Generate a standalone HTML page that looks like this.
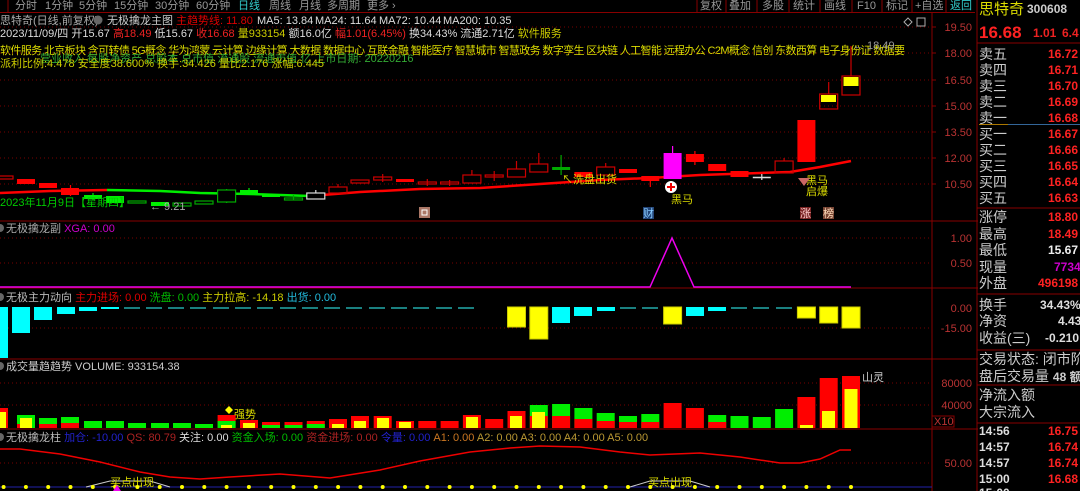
<!DOCTYPE html>
<html><head><meta charset="utf-8"><style>
html,body{margin:0;padding:0;background:#000;width:1080px;height:491px;overflow:hidden}
svg{position:absolute;left:0;top:0}
text{font-family:"Liberation Sans","Noto Sans CJK SC",sans-serif;font-size:11px}
.r text{font-size:14px}
</style></head><body>
<svg width="1080" height="491" viewBox="0 0 1080 491">
<rect width="1080" height="491" fill="#000"/>
<!-- toolbar -->
<line x1="0" y1="12.5" x2="975" y2="12.5" stroke="#800" />
<g fill="#999">
<text x="15" y="9">分时</text><text x="45" y="9">1分钟</text><text x="79" y="9">5分钟</text><text x="114" y="9">15分钟</text><text x="155" y="9">30分钟</text><text x="196" y="9">60分钟</text><text x="238" y="9" fill="#3cc">日线</text><text x="269" y="9">周线</text><text x="299" y="9">月线</text><text x="327" y="9">多周期</text><text x="367" y="9">更多 ›</text>
<text x="700" y="9">复权</text><text x="729" y="9">叠加</text><text x="762" y="9">多股</text><text x="793" y="9">统计</text><text x="824" y="9">画线</text><text x="857" y="9">F10</text><text x="886" y="9">标记</text><text x="915" y="9">+自选</text><text x="950" y="9" fill="#3cc">返回</text>
</g>
<g stroke="#800"><line x1="697" y1="0" x2="697" y2="12"/><line x1="726" y1="0" x2="726" y2="12"/><line x1="757" y1="0" x2="757" y2="12"/><line x1="789" y1="0" x2="789" y2="12"/><line x1="820" y1="0" x2="820" y2="12"/><line x1="852" y1="0" x2="852" y2="12"/><line x1="882" y1="0" x2="882" y2="12"/><line x1="912" y1="0" x2="912" y2="12"/><line x1="946" y1="0" x2="946" y2="12"/><line x1="8" y1="0" x2="8" y2="12"/></g>
<!-- header rows -->
<text x="0" y="24" fill="#aaa">思特奇(日线,前复权)</text>
<circle cx="98" cy="20" r="4.5" fill="#666"/>
<text x="107" y="24" fill="#ccc">无极擒龙主图</text>
<text x="176" y="24" fill="#d00">主趋势线: 11.80</text>
<text x="257" y="24" fill="#ddd">MA5: 13.84</text><text x="315" y="24" fill="#ddd">MA24: 11.64</text><text x="379" y="24" fill="#ddd">MA72: 10.44</text><text x="443" y="24" fill="#ddd">MA200: 10.35</text>
<text x="0" y="37" fill="#ddd">2023/11/09/四 开15.67 <tspan fill="#e22">高18.49</tspan> 低15.67 <tspan fill="#e22">收16.68</tspan> <tspan fill="#cc0">量933154</tspan> 额16.0亿 <tspan fill="#e22">幅1.01(6.45%)</tspan> 换34.43% 流通2.71亿 <tspan fill="#cc0">软件服务</tspan></text>
<text x="0" y="54" fill="#dd0" textLength="905">软件服务 北京板块 含可转债 5G概念 华为鸿蒙 云计算 边缘计算 大数据 数据中心 互联金融 智能医疗 智慧城市 智慧政务 数字孪生 区块链 人工智能 远程办公 C2M概念 信创 东数西算 电子身份证 数据要</text>
<text x="40" y="62" fill="#3a3">营业收入 每股净资产 总股本 总市值 流通股 流通市值 亿 上市日期: 20220216</text>
<text x="0" y="67" fill="#cc0">派利比例:4.478  安全度38.600%  换手:34.426 量比2.176  涨幅:6.445</text>
<path d="M908 18 l4 4 -4 4 -4 -4z" fill="none" stroke="#aaa"/><rect x="917" y="18" width="8" height="8" fill="none" stroke="#aaa"/>
<!-- grid main -->
<g stroke="#700" stroke-dasharray="1,3">
<line x1="0" y1="27" x2="932" y2="27"/><line x1="0" y1="53" x2="932" y2="53"/><line x1="0" y1="80" x2="932" y2="80"/><line x1="0" y1="106" x2="932" y2="106"/><line x1="0" y1="132" x2="932" y2="132"/><line x1="0" y1="158" x2="932" y2="158"/><line x1="0" y1="184" x2="932" y2="184"/>
<line x1="0" y1="238" x2="932" y2="238"/><line x1="0" y1="263" x2="932" y2="263"/>
<line x1="0" y1="328" x2="932" y2="328"/>
<line x1="0" y1="383" x2="932" y2="383"/><line x1="0" y1="405" x2="932" y2="405"/>
<line x1="0" y1="463" x2="932" y2="463"/>
</g>
<g stroke="#800"><line x1="0" y1="221" x2="978" y2="221"/><line x1="0" y1="288" x2="978" y2="288"/><line x1="0" y1="359" x2="978" y2="359"/><line x1="0" y1="429" x2="978" y2="429"/><line x1="932" y1="13" x2="932" y2="491"/><line x1="977" y1="0" x2="977" y2="491"/></g>
<g stroke="#800"><line x1="932" y1="27" x2="936" y2="27"/><line x1="932" y1="53" x2="936" y2="53"/><line x1="932" y1="80" x2="936" y2="80"/><line x1="932" y1="106" x2="936" y2="106"/><line x1="932" y1="132" x2="936" y2="132"/><line x1="932" y1="158" x2="936" y2="158"/><line x1="932" y1="184" x2="936" y2="184"/></g>
<g fill="#b33" text-anchor="end">
<text x="972" y="31">19.50</text><text x="972" y="57">18.00</text><text x="972" y="84">16.50</text><text x="972" y="110">15.00</text><text x="972" y="136">13.50</text><text x="972" y="162">12.00</text><text x="972" y="188">10.50</text>
<text x="972" y="242">1.00</text><text x="972" y="267">0.50</text><text x="972" y="312">0.00</text><text x="972" y="332">-15.00</text>
<text x="972" y="387">80000</text><text x="972" y="409">40000</text><text x="972" y="467">50.00</text>
</g>
<rect x="932" y="416" width="22" height="11" fill="none" stroke="#800"/><text x="934" y="425" fill="#b33" font-size="10">X10</text>
<!-- MA line -->
<polyline points="0,193 50,191 107,190" fill="none" stroke="#f00" stroke-width="2.5"/>
<polyline points="107,190 160,191 200,193 250,194 310,196" fill="none" stroke="#0e0" stroke-width="2.5"/>
<polyline points="310,196 360,192 420,189 480,188 540,184 600,180 650,178 700,175 760,173 790,172 820,167 851,161" fill="none" stroke="#f00" stroke-width="2.5"/>
<!-- candles -->
<g stroke-width="1.2">
<rect x="-5" y="176" width="18" height="3" fill="none" stroke="#c00"/>
<rect x="17" y="179" width="18" height="5" fill="#f00"/>
<rect x="39" y="183" width="18" height="5" fill="#f00"/>
<line x1="70.5" y1="185" x2="70.5" y2="196" stroke="#f00"/><rect x="61" y="188" width="18" height="7" fill="#f00"/>
<line x1="93" y1="193" x2="93" y2="200" stroke="#0e0"/><rect x="84" y="195" width="18" height="4" fill="#0e0"/>
<rect x="106" y="196" width="18" height="7" fill="#0e0"/>
<rect x="128" y="201" width="18" height="2" fill="none" stroke="#0a0"/>
<rect x="151" y="202" width="18" height="4" fill="#0e0"/>
<rect x="173" y="203" width="18" height="3" fill="none" stroke="#0a0"/>
<rect x="195" y="201" width="18" height="3" fill="none" stroke="#0a0"/>
<line x1="226.6" y1="189" x2="226.6" y2="203" stroke="#0a0"/><rect x="217.6" y="190" width="18" height="12" fill="#000" stroke="#0a0"/>
<line x1="249" y1="188" x2="249" y2="195" stroke="#0e0"/><rect x="240" y="190" width="18" height="5" fill="#0e0"/>
<rect x="262" y="194" width="18" height="3" fill="#0e0"/>
<line x1="293.5" y1="195" x2="293.5" y2="200" stroke="#0a0"/><rect x="284.5" y="198" width="18" height="2" fill="none" stroke="#0a0"/>
<line x1="315.8" y1="190" x2="315.8" y2="193" stroke="#ddd"/><rect x="306.8" y="193" width="18" height="6" fill="#000" stroke="#ddd"/>
<line x1="338" y1="184" x2="338" y2="187" stroke="#c00"/><rect x="329" y="187" width="18" height="6" fill="none" stroke="#c00"/>
<rect x="351" y="180" width="18" height="3" fill="none" stroke="#c00"/>
<line x1="382.7" y1="174" x2="382.7" y2="182" stroke="#c00"/><rect x="373.7" y="177" width="18" height="3" fill="none" stroke="#c00"/>
<rect x="396" y="179" width="18" height="3" fill="#f00"/>
<line x1="427.3" y1="179" x2="427.3" y2="186" stroke="#c00"/><rect x="418.3" y="182" width="18" height="2" fill="none" stroke="#c00"/>
<line x1="449.6" y1="180" x2="449.6" y2="186" stroke="#c00"/><rect x="440.6" y="182" width="18" height="2" fill="none" stroke="#c00"/>
<line x1="471.9" y1="170" x2="471.9" y2="175" stroke="#c00"/><rect x="462.9" y="175" width="18" height="8" fill="none" stroke="#c00"/>
<line x1="494.2" y1="171" x2="494.2" y2="181" stroke="#c00"/><rect x="485.2" y="175" width="18" height="2" fill="none" stroke="#c00"/>
<line x1="516.5" y1="161" x2="516.5" y2="169" stroke="#c00"/><rect x="507.5" y="169" width="18" height="8" fill="none" stroke="#c00"/>
<line x1="538.8" y1="153" x2="538.8" y2="164" stroke="#c00"/><rect x="529.8" y="164" width="18" height="8" fill="none" stroke="#c00"/>
<line x1="561.1" y1="155" x2="561.1" y2="175" stroke="#0a0"/><rect x="552.1" y="167" width="18" height="3" fill="#0a0"/>
<rect x="574.4" y="172" width="18" height="5" fill="#f00"/>
<line x1="605.7" y1="163" x2="605.7" y2="167" stroke="#c00"/><rect x="596.7" y="167" width="18" height="8" fill="none" stroke="#c00"/>
<rect x="619" y="169" width="18" height="4" fill="#f00"/>
<line x1="650.3" y1="176" x2="650.3" y2="187" stroke="#f00"/><rect x="641.3" y="176" width="18" height="5" fill="#f00"/>
<line x1="672.6" y1="146" x2="672.6" y2="153" stroke="#f0f"/><rect x="663.6" y="153" width="18" height="26" fill="#f0f"/>
<line x1="694.9" y1="151" x2="694.9" y2="165" stroke="#f00"/><rect x="685.9" y="154" width="18" height="8" fill="#f00"/>
<rect x="708.2" y="164" width="18" height="7" fill="#f00"/>
<rect x="730.5" y="171" width="18" height="6" fill="#f00"/>
<line x1="761.8" y1="174" x2="761.8" y2="180" stroke="#ddd"/><line x1="752.8" y1="177.5" x2="770.8" y2="177.5" stroke="#ddd" stroke-width="1.5"/>
<line x1="784.1" y1="158" x2="784.1" y2="161" stroke="#c00"/><rect x="775.1" y="161" width="18" height="12" fill="none" stroke="#c00"/>
<rect x="797.4" y="120" width="18" height="42" fill="#f00"/>
<line x1="828.7" y1="82" x2="828.7" y2="94" stroke="#c00"/><rect x="819.7" y="94" width="18" height="15" fill="none" stroke="#c00"/><rect x="821" y="95" width="15" height="7" fill="#ff0"/>
<line x1="851" y1="46" x2="851" y2="76" stroke="#c00"/><rect x="842" y="76" width="18" height="19" fill="none" stroke="#c00"/><rect x="843.5" y="77" width="15" height="9" fill="#ff0"/>
</g>
<text x="853" y="49" fill="#999" font-size="10">← 18.49</text>
<!-- annotations main -->
<text x="0" y="206" fill="#0c0">2023年11月9日【星期四】</text>
<text x="150" y="210" fill="#aaa" font-size="10">← 9.21</text>
<text x="562" y="183" fill="#dd0">↖洗盘出货</text>
<circle cx="671" cy="187" r="6" fill="#fff"/><path d="M671 183v8M667 187h8" stroke="#e00" stroke-width="2"/>
<text x="671" y="203" fill="#dd0">黑马</text>
<text x="806" y="184" fill="#dd0">黑马</text><text x="806" y="195" fill="#dd0">启爆</text>
<path d="M798 178 l12 0 -6 8z" fill="#c66"/>
<rect x="419" y="207" width="11" height="11" fill="#a76" /><rect x="422" y="210" width="5" height="5" fill="none" stroke="#fff"/>
<rect x="643" y="207" width="11" height="12" fill="#247"/><text x="643" y="217" fill="#8cf" font-size="10">财</text>
<rect x="800" y="207" width="11" height="12" fill="#722"/><text x="800" y="217" fill="#fcc" font-size="10">涨</text>
<rect x="823" y="207" width="11" height="12" fill="#743"/><text x="823" y="217" fill="#fdb" font-size="10">榜</text>
<!-- sub1 -->
<circle cx="0" cy="228" r="4" fill="#666"/>
<text x="6" y="232" fill="#aaa">无极擒龙副 <tspan fill="#c0c">XGA: 0.00</tspan></text>
<polyline points="0,287 650,287 672,238 694,287 851,287" fill="none" stroke="#e0e" stroke-width="1.5"/>
<!-- sub2 -->
<circle cx="0" cy="297" r="4" fill="#666"/>
<text x="6" y="301" fill="#bbb">无极主力动向 <tspan fill="#d00">主力进场: 0.00</tspan> <tspan fill="#0b0">洗盘: 0.00</tspan> <tspan fill="#cc0">主力拉高: -14.18</tspan> <tspan fill="#2bd">出货: 0.00</tspan></text>
<g fill="#0ff">
<rect x="0" y="307" width="8" height="51"/><rect x="12" y="307" width="18" height="26"/><rect x="34" y="307" width="18" height="13"/><rect x="57" y="307" width="18" height="7"/><rect x="79" y="307" width="18" height="4"/><rect x="101" y="307" width="18" height="2"/>
<rect x="552" y="307" width="18" height="16"/><rect x="574" y="307" width="18" height="9"/><rect x="597" y="307" width="18" height="4"/><rect x="686" y="307" width="18" height="9"/><rect x="708" y="307" width="18" height="4"/>
</g>
<g stroke="#2aa" stroke-width="1.5">
<line x1="124" y1="308" x2="140" y2="308"/><line x1="146" y1="308" x2="162" y2="308"/><line x1="168" y1="308" x2="184" y2="308"/><line x1="190" y1="308" x2="206" y2="308"/><line x1="213" y1="308" x2="229" y2="308"/><line x1="235" y1="308" x2="251" y2="308"/><line x1="257" y1="308" x2="273" y2="308"/><line x1="280" y1="308" x2="296" y2="308"/><line x1="302" y1="308" x2="318" y2="308"/><line x1="324" y1="308" x2="340" y2="308"/><line x1="346" y1="308" x2="362" y2="308"/><line x1="369" y1="308" x2="385" y2="308"/><line x1="391" y1="308" x2="407" y2="308"/><line x1="413" y1="308" x2="429" y2="308"/><line x1="436" y1="308" x2="452" y2="308"/><line x1="458" y1="308" x2="474" y2="308"/>
<line x1="620" y1="308" x2="636" y2="308"/><line x1="642" y1="308" x2="658" y2="308"/><line x1="731" y1="308" x2="747" y2="308"/><line x1="753" y1="308" x2="769" y2="308"/><line x1="776" y1="308" x2="792" y2="308"/>
</g>
<g fill="#ff0" stroke="#cc0">
<rect x="507.5" y="307" width="18" height="20"/><rect x="529.8" y="307" width="18" height="32"/><rect x="663.6" y="307" width="18" height="17"/><rect x="797.4" y="307" width="18" height="11"/><rect x="819.7" y="307" width="18" height="16"/><rect x="842" y="307" width="18" height="21"/>
</g>
<!-- volume -->
<circle cx="0" cy="366" r="4" fill="#666"/>
<text x="6" y="370" fill="#ccc">成交量趋趋势 VOLUME: 933154.38</text>
<g>
<rect x="0" y="408" width="8" height="20" fill="#f00"/><rect x="0" y="412" width="6" height="16" fill="#ff0"/>
<rect x="17" y="415" width="18" height="13" fill="#0e0"/><rect x="20" y="418" width="12" height="10" fill="#ff0"/><rect x="17" y="424" width="3" height="4" fill="#f00"/>
<rect x="39" y="418" width="18" height="10" fill="#0e0"/><rect x="39" y="424" width="18" height="4" fill="#f00"/>
<rect x="61" y="417" width="18" height="11" fill="#0e0"/><rect x="61" y="423" width="18" height="5" fill="#f00"/>
<rect x="84" y="421" width="18" height="7" fill="#0e0"/>
<rect x="106" y="421" width="18" height="7" fill="#0e0"/>
<rect x="128" y="423" width="18" height="5" fill="#0e0"/>
<rect x="151" y="423" width="18" height="5" fill="#0e0"/>
<rect x="173" y="423" width="18" height="5" fill="#0e0"/>
<rect x="195" y="424" width="18" height="4" fill="#0e0"/>
<rect x="217.6" y="415" width="18" height="13" fill="#f00"/><rect x="217.6" y="421" width="18" height="7" fill="#0e0"/><rect x="221" y="425" width="11" height="3" fill="#ff0"/>
<rect x="240" y="420" width="18" height="8" fill="#f00"/><rect x="243" y="423" width="12" height="5" fill="#ff0"/>
<rect x="262" y="422" width="18" height="6" fill="#f00"/><rect x="262" y="425" width="18" height="3" fill="#0e0"/>
<rect x="284.5" y="422" width="18" height="6" fill="#f00"/><rect x="284.5" y="425" width="18" height="3" fill="#0e0"/>
<rect x="306.8" y="421" width="18" height="7" fill="#f00"/><rect x="306.8" y="424" width="18" height="4" fill="#0e0"/>
<rect x="329" y="419" width="18" height="9" fill="#f00"/><rect x="332" y="424" width="12" height="4" fill="#ff0"/>
<rect x="351" y="416" width="18" height="12" fill="#f00"/><rect x="354" y="421" width="12" height="7" fill="#ff0"/>
<rect x="373.7" y="416" width="18" height="12" fill="#f00"/><rect x="377" y="418" width="12" height="10" fill="#ff0"/>
<rect x="396" y="421" width="18" height="7" fill="#f00"/><rect x="399" y="422" width="12" height="6" fill="#ff0"/>
<rect x="418.3" y="421" width="18" height="7" fill="#f00"/>
<rect x="440.6" y="421" width="18" height="7" fill="#f00"/>
<rect x="462.9" y="415" width="18" height="13" fill="#f00"/><rect x="466" y="417" width="12" height="11" fill="#ff0"/>
<rect x="485.2" y="419" width="18" height="9" fill="#f00"/>
<rect x="507.5" y="411" width="18" height="17" fill="#f00"/><rect x="510" y="416" width="12" height="12" fill="#ff0"/>
<rect x="529.8" y="405" width="18" height="23" fill="#0e0"/><rect x="529.8" y="416" width="18" height="12" fill="#f00"/><rect x="532" y="412" width="13" height="16" fill="#ff0"/>
<rect x="552.1" y="404" width="18" height="24" fill="#0e0"/><rect x="552.1" y="416" width="18" height="12" fill="#f00"/>
<rect x="574.4" y="408" width="18" height="20" fill="#0e0"/><rect x="574.4" y="419" width="18" height="9" fill="#f00"/>
<rect x="596.7" y="413" width="18" height="15" fill="#0e0"/><rect x="596.7" y="421" width="18" height="7" fill="#f00"/>
<rect x="619" y="416" width="18" height="12" fill="#0e0"/><rect x="619" y="422" width="18" height="6" fill="#f00"/>
<rect x="641.3" y="414" width="18" height="14" fill="#0e0"/><rect x="641.3" y="422" width="18" height="6" fill="#f00"/>
<rect x="663.6" y="403" width="18" height="25" fill="#f00"/>
<rect x="685.9" y="408" width="18" height="20" fill="#f00"/>
<rect x="708.2" y="415" width="18" height="13" fill="#0e0"/><rect x="708.2" y="422" width="18" height="6" fill="#f00"/>
<rect x="730.5" y="416" width="18" height="12" fill="#0e0"/>
<rect x="752.8" y="417" width="18" height="11" fill="#0e0"/>
<rect x="775.1" y="409" width="18" height="19" fill="#0e0"/>
<rect x="797.4" y="397" width="18" height="31" fill="#f00"/><rect x="800" y="425" width="13" height="3" fill="#ff0"/>
<rect x="819.7" y="378" width="18" height="50" fill="#f00"/><rect x="822" y="411" width="13" height="17" fill="#ff0"/>
<rect x="842" y="376" width="18" height="52" fill="#f00"/><rect x="844.5" y="389" width="13" height="39" fill="#ff0"/>
</g>
<path d="M225 410 l4 -4 4 4 -4 4z" fill="#ff0"/><text x="234" y="418" fill="#dd0">强势</text>
<text x="862" y="381" fill="#ccc" font-size="9">山灵</text>
<!-- last panel -->
<circle cx="0" cy="437" r="4" fill="#666"/>
<text x="6" y="441" fill="#bbb">无极擒龙柱 <tspan fill="#22c">加仓: -10.00</tspan> <tspan fill="#a22">QS: 80.79</tspan> <tspan fill="#ddd">关注: 0.00</tspan> <tspan fill="#0b0">资金入场: 0.00</tspan> <tspan fill="#a22">资金进场: 0.00</tspan> <tspan fill="#22c">令量: 0.00</tspan> <tspan fill="#c72">A1: 0.00</tspan> <tspan fill="#b93">A2: 0.00</tspan> <tspan fill="#b93">A3: 0.00</tspan> <tspan fill="#b93">A4: 0.00</tspan> <tspan fill="#b93">A5: 0.00</tspan></text>
<polyline points="0,449 20,449 60,454 100,462 140,472 170,477 200,479 230,477 280,474 330,478 380,470 420,461 470,452 510,448 540,446 580,447 620,452 650,455 700,453 740,457 780,463 800,463 820,459 840,450 851,450" fill="none" stroke="#e00" stroke-width="1.5"/>
<line x1="0" y1="487" x2="932" y2="487" stroke="#22a"/>
<polyline points="86,487 110,481 150,481 170,487" fill="none" stroke="#ccc"/>
<polyline points="630,487 650,481 690,481 710,487" fill="none" stroke="#ccc"/>
<text x="110" y="486" fill="#dd0">买点出现</text><text x="648" y="486" fill="#dd0">买点出现</text>
<g fill="#ff0">
<circle cx="3.6" cy="487" r="2"/><circle cx="25.9" cy="487" r="2"/><circle cx="48.2" cy="487" r="2"/><circle cx="70.5" cy="487" r="2"/><circle cx="92.8" cy="487" r="2"/><circle cx="115.1" cy="487" r="2"/><circle cx="137.4" cy="487" r="2"/><circle cx="159.7" cy="487" r="2"/><circle cx="182" cy="487" r="2"/><circle cx="204.3" cy="487" r="2"/><circle cx="226.6" cy="487" r="2"/><circle cx="248.9" cy="487" r="2"/><circle cx="271.2" cy="487" r="2"/><circle cx="293.5" cy="487" r="2"/><circle cx="315.8" cy="487" r="2"/><circle cx="338.1" cy="487" r="2"/><circle cx="360.4" cy="487" r="2"/><circle cx="382.7" cy="487" r="2"/><circle cx="405" cy="487" r="2"/><circle cx="427.3" cy="487" r="2"/><circle cx="449.6" cy="487" r="2"/><circle cx="471.9" cy="487" r="2"/><circle cx="494.2" cy="487" r="2"/><circle cx="516.5" cy="487" r="2"/><circle cx="538.8" cy="487" r="2"/><circle cx="561.1" cy="487" r="2"/><circle cx="583.4" cy="487" r="2"/><circle cx="605.7" cy="487" r="2"/><circle cx="628" cy="487" r="2"/><circle cx="650.3" cy="487" r="2"/><circle cx="672.6" cy="487" r="2"/><circle cx="694.9" cy="487" r="2"/><circle cx="717.2" cy="487" r="2"/><circle cx="739.5" cy="487" r="2"/><circle cx="761.8" cy="487" r="2"/><circle cx="784.1" cy="487" r="2"/><circle cx="806.4" cy="487" r="2"/><circle cx="828.7" cy="487" r="2"/><circle cx="851" cy="487" r="2"/>
</g>
<path d="M113 491 l4 -6 4 6z" fill="#e0e"/>
<!-- right panel -->
<g class="r">
<text x="979" y="14" fill="#dd0" style="font-size:15px">思特奇</text><text x="1027" y="13" fill="#ccc" style="font-size:12px;font-weight:bold">300608</text>
<text x="979" y="38" fill="#f22" style="font-size:17px;font-weight:bold">16.68</text><text x="1033" y="37" fill="#e22" style="font-size:12px;font-weight:bold">1.01</text><text x="1062" y="37" fill="#e22" style="font-size:12px;font-weight:bold">6.4</text>
<g stroke="#800"><line x1="977" y1="43" x2="1080" y2="43"/><line x1="977" y1="208" x2="1080" y2="208"/><line x1="977" y1="294" x2="1080" y2="294"/><line x1="977" y1="350" x2="1080" y2="350"/><line x1="977" y1="385" x2="1080" y2="385"/><line x1="977" y1="423" x2="1080" y2="423"/></g>
<line x1="979" y1="124.5" x2="1008" y2="124.5" stroke="#a70"/><line x1="1008" y1="124.5" x2="1080" y2="124.5" stroke="#369"/>
<g fill="#ccc">
<text x="979" y="59">卖五</text><text x="979" y="75">卖四</text><text x="979" y="91">卖三</text><text x="979" y="107">卖二</text><text x="979" y="123">卖一</text>
<text x="979" y="139">买一</text><text x="979" y="155">买二</text><text x="979" y="171">买三</text><text x="979" y="187">买四</text><text x="979" y="203">买五</text>
<text x="979" y="222">涨停</text><text x="979" y="239">最高</text><text x="979" y="255">最低</text><text x="979" y="272">现量</text><text x="979" y="288">外盘</text>
<text x="979" y="310">换手</text><text x="979" y="326">净资</text><text x="979" y="343">收益(三)</text>
<text x="979" y="364">交易状态: 闭市阶</text><text x="979" y="381">盘后交易量 <tspan style="font-size:12px;font-weight:bold">48 额</tspan></text>
<text x="979" y="400">净流入额</text><text x="979" y="417">大宗流入</text>
</g>
<g fill="#f22" style="font-size:12px;font-weight:bold">
<text x="1048" y="58" style="font-size:12px">16.72</text><text x="1048" y="74" style="font-size:12px">16.71</text><text x="1048" y="90" style="font-size:12px">16.70</text><text x="1048" y="106" style="font-size:12px">16.69</text><text x="1048" y="122" style="font-size:12px">16.68</text>
<text x="1048" y="138" style="font-size:12px">16.67</text><text x="1048" y="154" style="font-size:12px">16.66</text><text x="1048" y="170" style="font-size:12px">16.65</text><text x="1048" y="186" style="font-size:12px">16.64</text><text x="1048" y="202" style="font-size:12px">16.63</text>
<text x="1048" y="221" style="font-size:12px">18.80</text><text x="1048" y="238" style="font-size:12px">18.49</text><text x="1048" y="254" fill="#eee" style="font-size:12px">15.67</text><text x="1054" y="271" fill="#c0c" style="font-size:12px">7734</text><text x="1038" y="287" style="font-size:12px">496198</text>
<text x="1040" y="309" fill="#ddd" style="font-size:12px">34.43%</text><text x="1058" y="325" fill="#ddd" style="font-size:12px">4.43</text><text x="1045" y="342" fill="#ddd" style="font-size:12px">-0.210</text>
</g>
<g style="font-weight:bold">
<text x="979" y="435" fill="#ddd" style="font-size:12px">14:56</text><text x="1048" y="435" fill="#f22" style="font-size:12px">16.75</text>
<text x="979" y="451" fill="#ddd" style="font-size:12px">14:57</text><text x="1048" y="451" fill="#f22" style="font-size:12px">16.74</text>
<text x="979" y="467" fill="#ddd" style="font-size:12px">14:57</text><text x="1048" y="467" fill="#f22" style="font-size:12px">16.74</text>
<text x="979" y="483" fill="#ddd" style="font-size:12px">15:00</text><text x="1048" y="483" fill="#f22" style="font-size:12px">16.68</text>
<text x="979" y="497" fill="#ddd" style="font-size:12px">15:00</text>
</g>
</g>
</svg>
</body></html>
